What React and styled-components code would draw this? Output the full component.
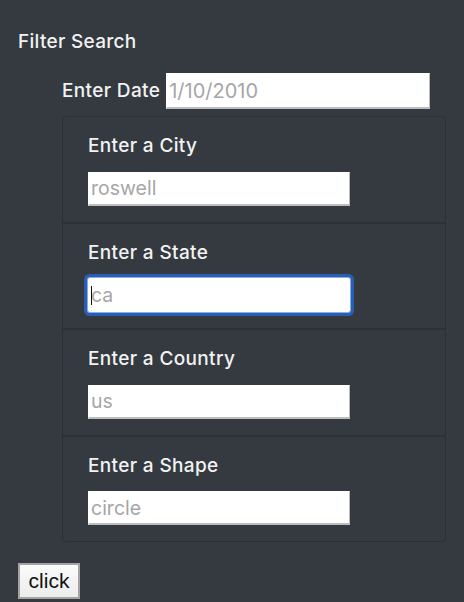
import React from 'react';
import styled, { createGlobalStyle, css } from 'styled-components';

const GlobalStyle = createGlobalStyle`
	body {
		margin: 0;
		background: #343a40;
		font-family: Inter, "Open Sans", sans-serif;
	}
`;

const Page = styled.div`
	min-height: 602px;
	box-sizing: border-box;
	padding: 30px 18px 0;
	background: #343a40;
`;

const Title = styled.div`
	font-size: 19px;
	font-weight: 500;
	letter-spacing: 0.3px;
	line-height: 24px;
	color: #f2f2f2;
`;

const Form = styled.div`
	margin: 19px 0 0 44px;
`;

const DateRow = styled.div`
	display: flex;
	align-items: center;
	gap: 6px;
`;

const Label = styled.label`
	display: block;
	font-size: 19px;
	font-weight: 500;
	letter-spacing: 0.35px;
	line-height: 24px;
	color: #f2f2f2;
`;

const Field = styled.input`
	box-sizing: border-box;
	width: ${p => p.$wide ? '264px' : '262px'};
	height: ${p => p.$wide ? '36px' : '34px'};
	padding: 0 2px;
	border: 1px solid #fff;
	border-right-color: #b8b8b8;
	border-bottom: 2px solid #bdbdbd;
	border-radius: 0;
	background: #fff;
	font-family: Inter, "Open Sans", sans-serif;
	font-size: ${p => p.$wide ? '20px' : '19.5px'};
	outline: none;
	&::placeholder {
		color: #a6a6a6;
	}
	${p => p.$focused && css`
		border: 1px solid #fff;
		border-radius: 2px;
		box-shadow: 0 0 0 1px #86aef0, 0 0 0 4px #2a5db4;
	`}
`;

const FieldWrap = styled.div`
	position: relative;
	width: 262px;
`;

const Caret = styled.span`
	position: absolute;
	left: 3px;
	top: 8px;
	width: 1px;
	height: 19px;
	background: #111;
`;

const ListGroup = styled.div`
	margin-top: 7px;
	width: 384px;
	box-sizing: border-box;
	border: 1px solid rgba(0, 0, 0, 0.15);
	border-radius: 4px;
`;

const Item = styled.div`
	padding: 17px 25px 16px;
	border-top: ${p => p.$first ? 'none' : '2px solid rgba(0, 0, 0, 0.15)'};
	display: flex;
	flex-direction: column;
	gap: 13.5px;
`;

const Button = styled.button`
	margin-top: 21px;
	width: 62px;
	height: 36px;
	padding: 0;
	border: 2px solid #a3a3a3;
	border-radius: 0;
	background: linear-gradient(#fbfbfb, #ececec);
	font-family: "Liberation Sans", Arial, sans-serif;
	font-size: 21px;
	color: #111;
`;

const fields = [
	{ label: 'Enter a City', hint: 'roswell' },
	{ label: 'Enter a State', hint: 'ca', focused: true },
	{ label: 'Enter a Country', hint: 'us' },
	{ label: 'Enter a Shape', hint: 'circle' },
];

const App = () => (
	<Page>
		<GlobalStyle />
		<Title>Filter Search</Title>
		<Form>
			<DateRow>
				<Label>Enter Date</Label>
				<Field $wide placeholder="1/10/2010" />
			</DateRow>
			<ListGroup>
				{fields.map((f, i) => (
					<Item key={f.label} $first={i === 0}>
						<Label>{f.label}</Label>
						<FieldWrap>
							<Field placeholder={f.hint} $focused={f.focused} />
							{f.focused ? <Caret /> : null}
						</FieldWrap>
					</Item>
				))}
			</ListGroup>
		</Form>
		<Button>click</Button>
	</Page>
);

export default App;
